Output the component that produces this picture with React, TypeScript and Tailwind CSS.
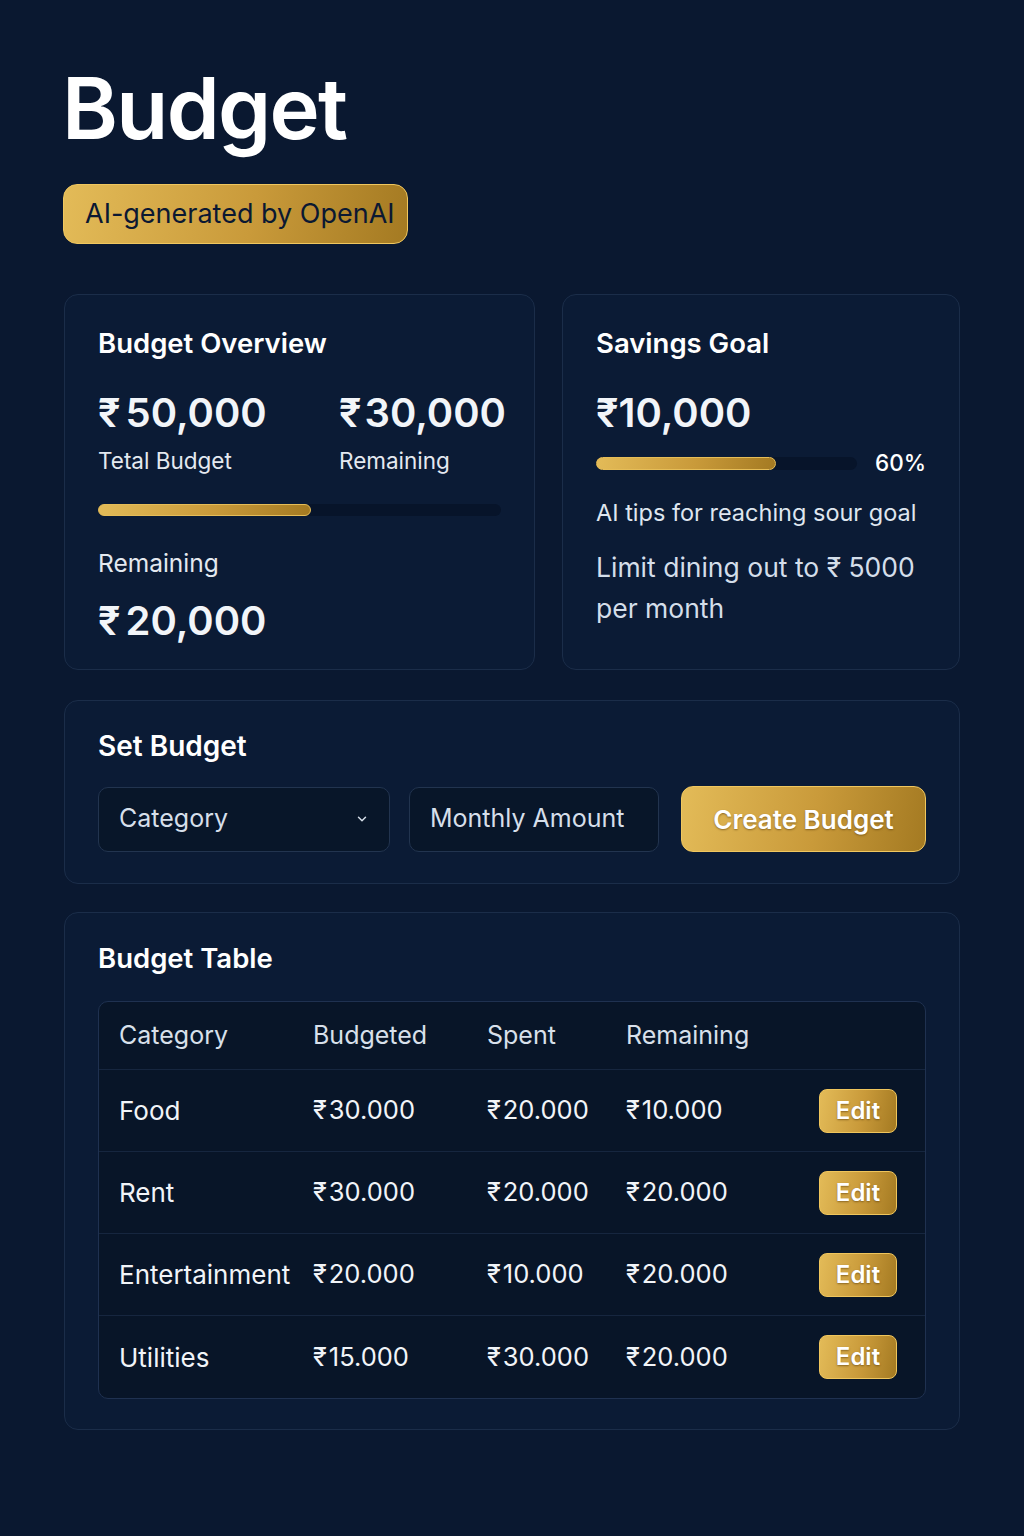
import React from "react";

const rows = [
  { c: "Food", b: "30.000", s: "20.000", r: "10.000" },
  { c: "Rent", b: "30.000", s: "20.000", r: "20.000" },
  { c: "Entertainment", b: "20.000", s: "10.000", r: "20.000" },
  { c: "Utilities", b: "15.000", s: "30.000", r: "20.000" },
];

const gold = "bg-[linear-gradient(100deg,#e3bb58_0%,#c99a3a_55%,#a47a22_100%)]";

function Money({ v }: { v: string }) {
  return (
    <span>
      <span className="mr-[2px]">₹</span>
      {v}
    </span>
  );
}

export default function App() {
  return (
    <div className="min-h-[1536px] w-full bg-[#0a1830] font-['Inter','Noto_Sans',sans-serif] text-[#f2f5f9]">
      <div className="px-16 pt-[66px] pb-24">
        <h1 className="-ml-[2px] text-[85px] font-semibold leading-none tracking-[-0.02em] text-white">Budget</h1>
        <div className={`-ml-px mt-[33px] inline-flex h-[60px] items-center rounded-[14px] border border-[#f0c75f] ${gold} pl-[21px] pr-[12px] text-[27px] text-[#0b1832]`}>
          AI-generated by OpenAI
        </div>

        <div className="mt-[50px] flex gap-[27px]">
          {/* Budget Overview */}
          <div className="h-[376px] w-[471px] shrink-0 rounded-[14px] border border-[#1b2d49] bg-[#0b1b35] px-[33px] pt-8">
            <h2 className="text-[27.5px] font-semibold leading-[32px] text-white">Budget Overview</h2>
            <div className="mt-[30px] flex">
              <div className="w-[241px] shrink-0">
                <div className="whitespace-nowrap text-[40px] font-semibold leading-[48px]">
                  <span className="mr-[5px]">₹</span>50,000
                </div>
                <div className="mt-[10px] text-[22.5px] leading-[28px] text-[#e4e9f0]">Tetal Budget</div>
              </div>
              <div className="shrink-0">
                <div className="whitespace-nowrap text-[40px] font-semibold leading-[48px]">
                  <span className="mr-[3px]">₹</span>30,000
                </div>
                <div className="mt-[10px] text-[22.5px] leading-[28px] text-[#e4e9f0]">Remaining</div>
              </div>
            </div>
            <div className="mt-[29px] h-[12px] w-full rounded-full bg-[#07142a]">
              <div className={`h-full w-[213px] rounded-full border border-[#e6bd57] ${gold}`} />
            </div>
            <div className="mt-[33px] text-[24.5px] leading-[28px] text-[#e4e9f0]">Remaining</div>
            <div className="mt-5 text-[40px] font-semibold leading-[48px]">
              <span className="mr-[5px]">₹</span>20,000
            </div>
          </div>

          {/* Savings Goal */}
          <div className="h-[376px] flex-1 rounded-[14px] border border-[#1b2d49] bg-[#0b1b35] px-[33px] pt-8">
            <h2 className="text-[27.5px] font-semibold leading-[32px] text-white">Savings Goal</h2>
            <div className="mt-[30px] text-[40px] font-semibold leading-[48px]">₹10,000</div>
            <div className="mt-3 flex h-[28px] items-center gap-[18px]">
              <div className="h-[13px] flex-1 rounded-full bg-[#07142a]">
                <div className={`h-full w-[180px] rounded-full border border-[#e6bd57] ${gold}`} />
              </div>
              <div className="text-[22.5px] font-medium leading-[28px] text-white">60%</div>
            </div>
            <div className="mt-[22px] text-[23.5px] leading-[28px] text-[#dfe6ef]">AI tips for reaching sour goal</div>
            <div className="mt-[20px] text-[26.5px] leading-[41px] text-[#d4deea]">
              Limit dining out to ₹ 5000 per month
            </div>
          </div>
        </div>

        {/* Set Budget */}
        <div className="mt-[30px] rounded-[14px] border border-[#1b2d49] bg-[#0b1b35] px-[33px] pt-[29px] pb-[31px]">
          <h2 className="text-[28px] font-semibold leading-[32px] text-white">Set Budget</h2>
          <div className="mt-[24px] flex items-center">
            <div className="flex h-[65px] w-[292px] items-center justify-between rounded-[10px] border border-[#22344f] bg-[#081629] pl-[20px] pr-[20px]">
              <span className="text-[25px] text-[#d6dfea]">Category</span>
              <svg width="14" height="14" viewBox="0 0 24 24" fill="none" stroke="#d6dfea" strokeWidth="2.5" strokeLinecap="round" strokeLinejoin="round">
                <path d="M6 9l6 6 6-6" />
              </svg>
            </div>
            <div className="ml-[19px] flex h-[65px] w-[250px] items-center rounded-[10px] border border-[#22344f] bg-[#081629] pl-[20px]">
              <span className="text-[25px] text-[#d6dfea]">Monthly Amount</span>
            </div>
            <button className={`ml-[22px] flex h-[66px] flex-1 items-center justify-center rounded-[12px] border border-[#f0c75f] ${gold} text-[26px] font-semibold text-white [text-shadow:0_1px_2px_rgba(90,60,10,0.6)]`}>
              Create Budget
            </button>
          </div>
        </div>

        {/* Budget Table */}
        <div className="mt-[28px] rounded-[14px] border border-[#1b2d49] bg-[#0b1b35] px-[33px] pt-[29px] pb-[30px]">
          <h2 className="text-[27.5px] font-semibold leading-[32px] text-white">Budget Table</h2>
          <div className="mt-[27px] overflow-hidden rounded-[10px] border border-[#1f3150] bg-[#081528]">
            <div className="grid h-[68px] grid-cols-[194px_174px_139px_1fr_auto] items-center border-b border-[#16263f] pl-[20px] pr-[28px] text-[25px] text-[#d8e0eb]">
              <span>Category</span>
              <span>Budgeted</span>
              <span>Spent</span>
              <span>Remaining</span>
              <span className="w-[78px]" />
            </div>
            {rows.map((r, i) => (
              <div
                key={r.c}
                className={`grid h-[82px] grid-cols-[194px_174px_139px_1fr_auto] items-center pl-[20px] pr-[28px] text-[25.5px] text-[#f1f4f8] ${i < rows.length - 1 ? "border-b border-[#16263f]" : ""}`}
              >
                <span className="text-[26px]">{r.c}</span>
                <Money v={r.b} />
                <Money v={r.s} />
                <Money v={r.r} />
                <button className={`flex h-[44px] w-[78px] items-center justify-center rounded-[8px] border border-[#efc55c] ${gold} text-[24px] font-semibold text-white [text-shadow:0_1px_2px_rgba(90,60,10,0.6)]`}>
                  Edit
                </button>
              </div>
            ))}
          </div>
        </div>
      </div>
    </div>
  );
}
